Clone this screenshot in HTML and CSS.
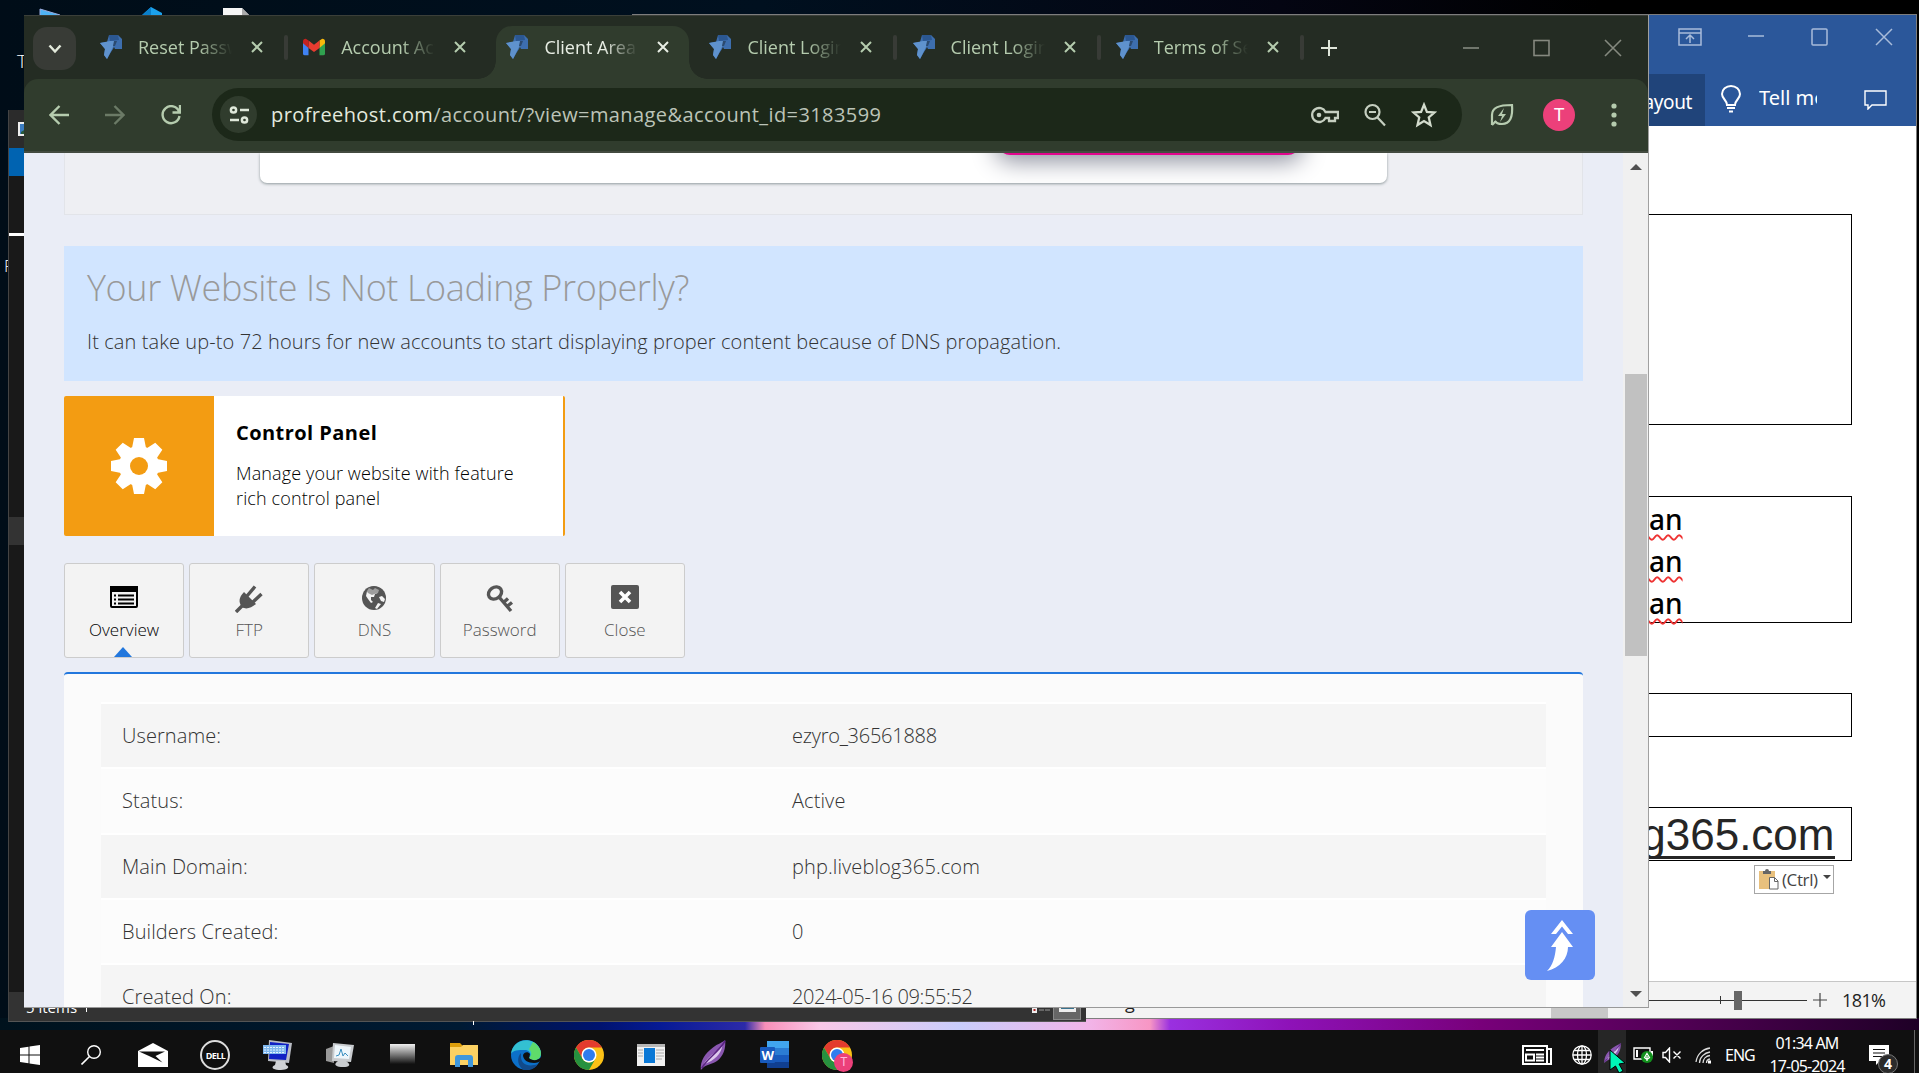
FILE: index.html
```html
<!DOCTYPE html>
<html lang="en">
<head>
<meta charset="utf-8">
<title>Desktop</title>
<link rel="stylesheet" href="styles.css">
</head>
<body>
<svg class="defs" width="0" height="0" aria-hidden="true">
  <symbol id="fav" viewBox="0 0 22 24"><path d="M9 0h9l4 4v10h-7l-1-2-1 2-2 3-4 7-3-4 1-6-5-6 7-1z" fill="#3d6eae"/><path d="M9 0h9l1 5-9 1z" fill="#2b5791"/><path d="M0 8l10-2 5 0-2 6-6 12-3-4 1-6z" fill="#5f92cd"/><path d="M14 6l3 0-2 5-2 0z" fill="#2b4a70"/></symbol>
  <symbol id="x" viewBox="0 0 12 12"><path d="M1 1l10 10M11 1L1 11" fill="none" stroke="currentColor" stroke-width="2"/></symbol>
  <symbol id="chrome" viewBox="0 0 30 30"><circle cx="15" cy="15" r="15" fill="#fbc116"/><path d="M2 7.5A15 15 0 0 1 28 7.5H15A7.5 7.500 0 0 0 8.500 11.300L8 18z" fill="#e33b2e"/><path d="M2 7.500A15 15 0 0 0 15 30l6.500-11.250A7.500 7.500 0 0 1 8.500 18.750z" fill="#26913f"/><circle cx="15" cy="15" r="7.500" fill="#fff"/><circle cx="15" cy="15" r="6" fill="#2f7cee"/></symbol>
  <symbol id="quill" viewBox="0 0 30 32"><path d="M2 32C1 22 7 14 15 8c5-4 10-5 13-8 1 9-2 17-8 22-5 4-12 4-16 8z" fill="#8a57b0"/><path d="M5 26C9 18 17 14 25 6c-1 8-8 16-20 20z" fill="#dcc9ec"/><path d="M3 30C9 19 19 15 28 1" fill="none" stroke="#5a2382" stroke-width="1.600"/></symbol>
</svg>
<main class="desktop">
  <svg class="shortcuts" width="260" height="16" viewBox="0 0 260 16"><path d="M40 9l20 6v1H40z" fill="#4fb4f4" stroke="#9ad" stroke-width="1"/><path d="M141 16l10-9 11 6v3z" fill="#1ba1ec"/><path d="M141 16l10-9v9z" fill="#0b7fc9"/><path d="M223 8h19l8 8h-27z" fill="#f5f5f5"/><path d="M242 8l8 8h-8z" fill="#aaa"/></svg>
  <span class="desk-letter">T</span>
  <span class="desk-letter low">F</span>
  <div class="tick"></div>

  <section class="word">
    <header class="w-title">
      <div class="w-controls">
        <svg width="24" height="18" viewBox="0 0 24 18"><path d="M1 1h22v16H1zM1 5h22M12 15V7M8 11l4-4 4 4" /></svg>
        <svg width="18" height="18" viewBox="0 0 18 18"><path d="M1 8h16"/></svg>
        <svg width="18" height="18" viewBox="0 0 18 18"><rect x="1" y="1" width="15" height="16" rx="1"/></svg>
        <svg width="18" height="18" viewBox="0 0 18 18"><path d="M1 1l16 16M17 1L1 17"/></svg>
      </div>
      <div class="w-tabs">
        <span class="w-tab">Layout</span>
        <svg class="bulb" width="20" height="28" viewBox="0 0 20 28"><path d="M6 20c0-5-5-6-5-11a9 8 0 0 1 18 0c0 5-5 6-5 11zM6 23h8M8 26.500h4" fill="none" stroke="#fff" stroke-width="2"/></svg>
        <span class="tell">Tell me</span>
        <svg class="comment" width="23" height="20" viewBox="0 0 23 20"><path d="M1 1h21v14H8l-4 4v-4H1z" fill="none" stroke="#fff" stroke-width="1.400"/></svg>
      </div>
    </header>
    <div class="w-doc">
      <div class="cell c1"></div>
      <div class="cell c2"><p>an</p><p>an</p><p>an</p></div>
      <div class="cell c3"></div>
      <div class="cell c4"><span>g365.com</span></div>
      <div class="paste"><svg width="20" height="21" viewBox="0 0 20 21"><rect x="0" y="2" width="16" height="18" fill="#e8c07d"/><path d="M4 2h2a2 2 0 0 1 4 0h2v3H4z" fill="#666"/><path d="M10.500 8.500h5l3.500 3.500v8h-8.500z" fill="#fff" stroke="#666"/><path d="M15.500 8.500v4h3.500" fill="none" stroke="#666"/></svg><span>(Ctrl)</span><i></i></div>
    </div>
    <footer class="w-status">
      <span class="w-g">g</span><i class="w-view"></i>
      <div class="slider"><i class="notch"></i><i class="knob"></i></div>
      <svg width="14" height="14" viewBox="0 0 14 14"><path d="M0 7h14M7 0v14" stroke="#444" stroke-width="1.200"/></svg>
      <span class="zoom">181%</span>
    </footer>
  </section>

  <section class="explorer">
    <div class="ex-title"><svg width="16" height="14" viewBox="0 0 16 14"><rect x="1" y="1" width="14" height="12" fill="#3b7cc0" stroke="#eee" stroke-width="2"/><path d="M3 10l5-3 5 3v2H3z" fill="#265a3a"/></svg></div>
    <div class="ex-ribbon"></div>
    <div class="ex-body"><i class="ex-line"></i><i class="ex-sel"></i></div>
    <div class="ex-status"><span class="ex-items">5 items</span><i class="ex-sep"></i><span class="ex-grow"></span><svg width="22" height="8" viewBox="0 0 22 8"><rect x="1" y="0" width="5" height="7" fill="#eee"/><rect x="2.500" y="3" width="2" height="2" fill="#a22"/><path d="M8 4h5M14 4h5" stroke="#999"/></svg><span class="ex-view"><svg width="17" height="8" viewBox="0 0 17 8"><path d="M0 0h17v8H0z" fill="#eee"/><path d="M2 0h13v5H2z" fill="#37728e"/></svg></span></div>
  </section>

  <section class="chrome">
    <div class="strip">
      <span class="list"><svg width="14" height="10" viewBox="0 0 14 10"><path d="M1.500 1.500L7 7.500l5.500-6" fill="none" stroke="#e3eadc" stroke-width="2.500"/></svg></span>
      <div class="tab"><svg class="fav"><use href="#fav"/></svg><span class="t">Reset Passwo</span><svg class="x"><use href="#x"/></svg><i class="sep"></i></div>
      <div class="tab"><svg class="fav" viewBox="0 0 24 18"><path d="M0 3v13a2 2 0 0 0 2 2h4V8z" fill="#3f82f2"/><path d="M24 3v13a2 2 0 0 1-2 2h-4V8z" fill="#30a24f"/><path d="M18 2l3-2q3 0 3 3v2l-6 5z" fill="#f9b90c"/><path d="M6 2l6 4.500L18 2v8l-6 4.500L6 10z" fill="#e83c30"/><path d="M6 2L3 0Q0 0 0 3v2l6 5z" fill="#c5221f"/></svg><span class="t">Account Act</span><svg class="x"><use href="#x"/></svg></div>
      <div class="tab active"><svg class="fav"><use href="#fav"/></svg><span class="t">Client Area</span><svg class="x"><use href="#x"/></svg></div>
      <div class="tab"><svg class="fav"><use href="#fav"/></svg><span class="t">Client Login</span><svg class="x"><use href="#x"/></svg><i class="sep"></i></div>
      <div class="tab"><svg class="fav"><use href="#fav"/></svg><span class="t">Client Login</span><svg class="x"><use href="#x"/></svg><i class="sep"></i></div>
      <div class="tab"><svg class="fav"><use href="#fav"/></svg><span class="t">Terms of Ser</span><svg class="x"><use href="#x"/></svg><i class="sep"></i></div>
      <svg class="plus" width="16" height="16" viewBox="0 0 16 16"><path d="M0 8h16M8 0v16" stroke="#dfe6da" stroke-width="2"/></svg>
      <div class="win">
        <svg width="18" height="18" viewBox="0 0 18 18"><path d="M1 9h16"/></svg>
        <svg width="18" height="18" viewBox="0 0 18 18"><rect x="1" y="1.500" width="15" height="15"/></svg>
        <svg width="18" height="18" viewBox="0 0 18 18"><path d="M1 1l16 16M17 1L1 17"/></svg>
      </div>
    </div>
    <div class="toolbar">
      <svg class="nav" width="20" height="20" viewBox="0 0 20 20"><path d="M20 10H2M10.500 1L1.500 10l9 9"/></svg>
      <svg class="nav dim" width="20" height="20" viewBox="0 0 20 20"><path d="M0 10h18M9.500 1l9 9-9 9"/></svg>
      <svg class="nav" width="20" height="20" viewBox="0 0 20 20"><path d="M18 6.500A8.500 8.500 0 1 0 18.500 11M19 0v7.500h-7.500"/></svg>
      <div class="omni">
        <span class="site"><svg width="20" height="18" viewBox="0 0 20 18"><g fill="none" stroke="#dfe8da" stroke-width="2.500"><circle cx="4.500" cy="4" r="2.600"/><path d="M11 4h9M1 14h9"/><circle cx="15.500" cy="14" r="2.600"/></g></svg></span>
        <span class="url">profreehost.com<em>/account/?view=manage&amp;account_id=3183599</em></span>
        <svg width="28" height="18" viewBox="0 0 28 18"><path d="M14.500 6A7 7 0 1 0 14.500 12H18v3h6v-3h3V6z" fill="none" stroke="#c5cfc0" stroke-width="2.300"/><circle cx="8" cy="9" r="2.300" fill="#c5cfc0"/></svg>
        <svg width="24" height="24" viewBox="0 0 24 24"><g fill="none" stroke="#c5cfc0" stroke-width="2.200"><circle cx="9.500" cy="9" r="7"/><path d="M14.500 14.500L22 22.500M6 9h7"/></g></svg>
        <svg width="26" height="26" viewBox="0 0 24 24"><path d="M12 2.500l2.700 6.600 7 .6-5.300 4.600 1.600 7L12 17.600 6 21.300l1.600-7L2.300 9.700l7-.6z" fill="none" stroke="#d3dccd" stroke-width="2.100"/></svg>
      </div>
      <svg class="leaf" width="24" height="24" viewBox="0 0 24 24"><path d="M2 22V12C2 5 8 2 22 2c1 12-2 19-10 19-4 0-6-1-7-3" fill="none" stroke="#b7ccb0" stroke-width="2.200"/><path d="M2 22l4-4" stroke="#b7ccb0" stroke-width="2.200"/><path d="M14 5l-6 8h4l-2 6 6-8h-4z" fill="#b7ccb0"/></svg>
      <span class="avatar">T</span>
      <svg class="dots" width="6" height="24" viewBox="0 0 6 24"><circle cx="3" cy="3" r="2.600"/><circle cx="3" cy="12" r="2.600"/><circle cx="3" cy="21" r="2.600"/></svg>
    </div>
    <div class="view">
      <div class="page">
        <div class="banner"><div class="ad"><i class="cta"></i></div></div>
        <div class="notice"><h2>Your Website Is Not Loading Properly?</h2><p>It can take up-to 72 hours for new accounts to start displaying proper content because of DNS propagation.</p></div>
        <div class="cp">
          <span class="gear"><svg width="56" height="56" viewBox="-28 -28 56 56"><g fill="#fff"><circle r="20"/><g id="g1"><path id="tooth" d="M-5 -28h10l2 10h-14zM-5 28h10l2-10h-14z"/><use href="#tooth" transform="rotate(90)"/></g><use href="#g1" transform="rotate(45)"/></g><circle r="9" fill="#f39c12"/></svg></span>
          <div class="cp-text"><h3>Control Panel</h3><p>Manage your website with feature<br>rich control panel</p></div>
        </div>
        <nav class="actions">
          <a class="on"><svg width="28" height="24" viewBox="0 0 28 24"><rect x="1" y="2" width="26" height="20" rx="1" fill="none" stroke="currentColor" stroke-width="2"/><path d="M0 1h28v6H0z" fill="currentColor"/><path d="M4 10.500h2M4 14.500h2M4 18.500h2M8 10.500h16M8 14.500h16M8 18.500h16" stroke="currentColor" stroke-width="2"/></svg><span>Overview</span><i></i></a>
          <a><svg width="28" height="28" viewBox="0 0 28 28"><path d="M7 22C3 17 4 12 9 7l12 12c-5 4-10 6-14 3z" fill="currentColor"/><path d="M1 27l8-8M12 11l8-9.500M18 17L26.500 9" stroke="currentColor" stroke-width="3.400"/></svg><span>FTP</span></a>
          <a><svg width="26" height="26" viewBox="0 0 26 26"><circle cx="13" cy="13" r="12" fill="currentColor"/><path d="M8 3l4 2 2-2 4 2-1 3-3 1-1 3-3 0 0 3 2 2-2 1-3-4-2-3 1-5zM18 12l3-1 3 3-1 3-3-1zM17 18l3 1-4 5-2-1z" fill="#f3f3f3"/><path d="M4 4q9-6 18 1l-3 5-3-2-5 2-4-2z" fill="currentColor" opacity=".55"/></svg><span>DNS</span></a>
          <a><svg width="28" height="28" viewBox="0 0 28 28"><g fill="none" stroke="currentColor" stroke-width="3.400"><ellipse cx="9" cy="8" rx="7" ry="5.600" transform="rotate(-35 9 8)"/><path d="M13 12l12 14M18 17l4-3.500M21.500 21l4.500-3.500"/></g></svg><span>Password</span></a>
          <a><svg width="28" height="24" viewBox="0 0 28 24"><rect width="28" height="24" rx="2" fill="currentColor"/><path d="M9 7l10 10M19 7L9 17" stroke="#fff" stroke-width="3.600"/></svg><span>Close</span></a>
        </nav>
        <div class="panel">
          <dl>
            <div><dt>Username:</dt><dd class="num">ezyro_36561888</dd></div>
            <div><dt>Status:</dt><dd>Active</dd></div>
            <div><dt>Main Domain:</dt><dd>php.liveblog365.com</dd></div>
            <div><dt>Builders Created:</dt><dd>0</dd></div>
            <div><dt>Created On:</dt><dd class="num date">2024-05-16 09:55:52</dd></div>
          </dl>
        </div>
        <a class="totop"><svg width="28" height="54" viewBox="0 0 28 54"><path d="M5 16L16 2l11 14h-5l-6-7.500L10 16z" fill="#fff"/><path d="M16 14l11 15h-5C22 40 14 50 1 53c6-6 8-14 9-24H5z" fill="#fff"/></svg></a>
      </div>
      <div class="scroll"><i class="up"></i><i class="thumb"></i><i class="down"></i></div>
    </div>
  </section>

  <footer class="taskbar">
    <div class="apps">
      <span><svg width="20" height="20" viewBox="0 0 20 20"><path d="M0 3l8.500-1.300V9.500H0zM9.500 1.500L20 0v9.500H9.500zM0 10.500h8.500v7.800L0 17zM9.500 10.500H20V20L9.500 18.500z" fill="#fff"/></svg></span>
      <span><svg width="20" height="20" viewBox="0 0 20 20"><circle cx="13" cy="7" r="6.300" fill="none" stroke="#fff" stroke-width="1.400"/><path d="M8.500 11.500L.5 19.500" stroke="#fff" stroke-width="1.600"/></svg></span>
      <span><svg width="30" height="24" viewBox="0 0 30 24"><path d="M0 8L15 0l15 8v16H0z" fill="#fff"/><path d="M1 8.500h26L17.500 13l7 6.500L11 13z" fill="#101010"/></svg></span>
      <span class="dell">DELL</span>
      <span><svg width="30" height="30" viewBox="0 0 30 30"><path d="M6 0l23 3-3 20-21-2z" fill="#b9bcc4"/><path d="M7 2l19 2-3 16-17-1z" fill="#1021c4"/><path d="M0 5h23v9H0z" fill="#7fb7ee"/><path d="M1 7.500h21M1 10h21M1 12.500h21" stroke="#e5f2ff" stroke-dasharray="2 1"/><path d="M13 21h9l1 4c5 2 1 5-5 5s-12-2-6-5z" fill="#d0d2d6"/></svg></span>
      <span><svg width="28" height="26" viewBox="0 0 28 26"><path d="M0 7l8-3v17l-8-2z" fill="#999"/><path d="M7 1l21 2-3 17-19-1z" fill="#c9cccf"/><path d="M9 3l16 2-2 12-15-1z" fill="#eef6fb"/><path d="M10 14l3-1 2-6 2 7 2-3 3 3" fill="none" stroke="#3a8fc0"/><path d="M12 19h8c6 4 3 6-3 6s-11-2-5-6z" fill="#c9cccf"/></svg></span>
      <span class="slab"></span>
      <span><svg width="28" height="24" viewBox="0 0 28 24"><path d="M0 0h10l3 3h14v19H0z" fill="#dd9e0b"/><path d="M0 4h11l2-2h15v20H0z" fill="#fcd162"/><path d="M5 24v-9q0-3 3-3h12q3 0 3 3v9h-5v-7h-8v7z" fill="#3f97dc"/></svg></span>
      <span><svg width="30" height="30" viewBox="0 0 30 30"><circle cx="15" cy="15" r="15" fill="#0c70c9"/><path d="M0 14C1 4 10-1 18 .5 27 2 32 11 29 17c-2 4-8 4-11 1 3-3 1-8-4-8C7 10 2 10 0 14z" fill="#33c0d2"/><path d="M22 2c8 5 9 11 7 15-2 4-8 4-11 1 3-3 3-6 0-9z" fill="#5fdc6a"/><path d="M10 17c0 6 6 11 17 7-3 5-9 7-14 6-6-3-8-12-3-17z" fill="#114a8b"/><path d="M12 15c0 5 5 8 11 8 3 0 6-1 7-3v-3c-3 4-9 4-12 1l1-4c-2-3-6-2-7 1z" fill="#101010"/></svg></span>
      <span><svg width="30" height="30"><use href="#chrome"/></svg></span>
      <span><svg width="28" height="22" viewBox="0 0 28 22"><path d="M0 0h28v22H0z" fill="#f1f1f1"/><path d="M0 0h28v3H0z" fill="#b5b5b5"/><path d="M7 4h11v15H7z" fill="#0a78d6"/><path d="M1 6h5M1 9h5M1 12h5M19 6h8M19 9h8M19 12h8M19 15h6" stroke="#aaa"/></svg></span>
      <span><svg width="28" height="30"><use href="#quill"/></svg></span>
      <span><svg width="30" height="28" viewBox="0 0 30 28"><path d="M7 0h22v7H7z" fill="#41a5ee"/><path d="M7 7h22v7H7z" fill="#2b7cd3"/><path d="M7 14h22v7H7z" fill="#185abd"/><path d="M7 21h22v6H7z" fill="#103f91"/><rect y="6" width="15" height="16" rx="1" fill="#185abd"/><text x="1.500" y="18.500">W</text></svg></span>
      <span class="duo"><svg width="30" height="30"><use href="#chrome"/></svg><b>T</b></span>
    </div>
    <div class="tray">
      <svg class="news" width="30" height="20" viewBox="0 0 30 20"><g fill="none" stroke="#fff" stroke-width="2"><path d="M1 1h24v18H1zM25 4h4v15h-4M4 5h18M4 9.500h8v6H4zM14 9.500h8M14 12.500h8M14 15.500h8"/></g></svg>
      <svg class="globe" width="20" height="20" viewBox="0 0 20 20"><g fill="none" stroke="#fff" stroke-width="1.300"><circle cx="10" cy="10" r="9.200"/><ellipse cx="10" cy="10" rx="4.500" ry="9.200"/><path d="M10 1v18M1 10h18M2.500 5.500h15M2.500 14.500h15"/></g></svg>
      <span class="hot"><svg width="19" height="20"><use href="#quill"/></svg><svg class="cursor" width="17" height="24" viewBox="0 0 17 24"><path d="M1 1l15 13-6 1 4 7-4 2-3.500-7L1 21z" fill="#00f5b8" stroke="#000"/></svg></span>
      <svg class="batt" width="20" height="16" viewBox="0 0 20 16"><path d="M1 1h16v11H1z" fill="none" stroke="#fff" stroke-width="1.400"/><path d="M3 3h2v7H3zM18 4h2v5h-2z" fill="#fff"/><circle cx="14" cy="10" r="6" fill="#12901d"/><path d="M14 6.500l2.500 4-2.500 2-2.500-2zM14 9v5" fill="none" stroke="#fff" stroke-width="1.200"/></svg>
      <svg class="snd" width="20" height="16" viewBox="0 0 20 16"><path d="M1 5.500h2.500L7.500 1v14l-4-4.500H1zM11.500 4.500l7 7M18.500 4.500l-7 7" fill="none" stroke="#fff" stroke-width="1.400"/></svg>
      <svg class="wifi" width="18" height="17" viewBox="0 0 18 17"><g fill="none" stroke="#ddd" stroke-width="1.300"><path d="M1 15C2 7 8 2 15 1M4.500 16c0-6 5-10 10.500-11M8 16c0-4 3-7 7-7.500M11.500 16q0-3.500 3.500-4"/></g><rect x="13" y="13.500" width="3" height="3" fill="#fff"/></svg>
      <span class="eng">ENG</span>
      <div class="clock"><span>01:34 AM</span><span>17-05-2024</span></div>
      <span class="notif"><svg width="20" height="20" viewBox="0 0 20 20"><path d="M0 0h20v16h-9l-4 4v-4H0z" fill="#fff"/><path d="M4 4.500h12M4 8h12M4 11.500h12" stroke="#111" stroke-width="1.200"/></svg><b>4</b></span>
      <i class="peek"></i>
    </div>
  </footer>
</main>
</body>
</html>
```
FILE: styles.css
```css
* { box-sizing: border-box; }
body { margin: 0; overflow: hidden; font-family: "Open Sans", "Noto Sans", sans-serif; }
h2, h3, p, dl, dd { margin: 0; }
b, em, i { font-weight: inherit; font-style: normal; }
svg { display: block; flex: none; }
.defs { position: absolute; }

.desktop {
  position: relative; width: 1919px; height: 1073px; overflow: hidden;
  background:
    linear-gradient(90deg, #00121d 0, #001a33 460px, #00136f 600px, #061a94 660px, #2c2aa8 745px, #f78fb8 765px, #f9c8e8 820px, #c9cdfb 960px, #f2b4e8 1090px, #f796c4 1150px, #9a30e0 1170px, #8e12b8 1290px, #78007a 1480px, #4c0050 1700px, #1e0026 1919px) 0 1018px / 100% 12px no-repeat,
    linear-gradient(90deg, #000d18 0, #00101f 760px, #040512 1280px, #000 1600px, #000 100%);
}
.shortcuts { position: absolute; left: 0; top: 0; }
.desk-letter { position: absolute; left: 17px; top: 48px; font-size: 19px; line-height: 26px; color: #fff; font-weight: 300; }
.desk-letter.low { left: 4px; top: 253px; font-size: 17px; }
.tick { position: absolute; z-index: 1; left: 473px; top: 1021px; width: 1px; height: 4px; background: #fff; }

/* File Explorer, mostly covered */
.explorer { position: absolute; left: 8px; top: 110px; width: 1078px; height: 912px; display: flex; flex-direction: column; background: #191919; border-left: 1px solid #444; border-bottom: 1px solid #555; }
.ex-title { height: 38px; background: #2b2b2b; padding: 12px 0 0 9px; }
.ex-ribbon { height: 28px; background: #0063b1; }
.ex-body { flex: 1; display: flex; flex-direction: column; padding-top: 57px; }
.ex-line { height: 3px; background: #fff; }
.ex-sel { height: 28px; margin-top: 281px; background: #333; }
.ex-status { height: 29px; background: #333; display: flex; align-items: flex-end; padding-bottom: 7px; color: #fff; }
.ex-items { font-size: 15px; line-height: 20px; margin: 0 12px -3px 17px; width: 48px; white-space: nowrap; }
.ex-sep { width: 1px; height: 14px; background: #fff; margin-bottom: 2px; }
.ex-grow { flex: 1; }
.ex-view { align-self: stretch; margin: 0 5px -6px 0; width: 28px; background: #666; border: 1px solid #888; display: flex; align-items: flex-end; justify-content: center; padding-bottom: 7px; }

/* Word */
.word { position: absolute; left: 632px; top: 14px; width: 1285px; height: 1005px; display: flex; flex-direction: column; background: #fff; border: 1px solid #7d7d7d; }
.w-title { height: 111px; background: #2b579a; display: flex; flex-direction: column; }
.w-controls { height: 59px; display: flex; justify-content: flex-end; padding: 13px 23px 0 0; gap: 46px; }
.w-controls svg { fill: none; stroke: #a9bcda; stroke-width: 1.500; }
.w-controls svg:first-child { margin-right: -1px; }
.w-tabs { flex: 1; display: flex; align-items: center; padding-left: 1001px; color: #fff; font-family: "Noto Sans", sans-serif; }
.w-tab { width: 71px; height: 52px; background: #20447a; display: flex; justify-content: flex-end; align-items: center; padding: 3px 13px 0 0; font-size: 19px; letter-spacing: -.4px; }
.bulb { margin: -2px 18px 0 16px; }
.tell { width: 58px; overflow: hidden; white-space: nowrap; font-size: 20px; line-height: 28px; margin-top: -5px; }
.comment { margin-left: 47px; }
.w-doc { flex: 1; padding-top: 88px; position: relative; }
.cell { width: 1218.500px; border: solid #000; border-width: 1px 1px 1px 0; }
.c1 { height: 211px; margin-bottom: 71px; }
.c2 { height: 127px; margin-bottom: 70px; padding: 1px 0 0 1016px; }
.c2 p { width: 37px; font: 500 28px/42px "Noto Sans", sans-serif; text-decoration: underline wavy #e33 1.500px; text-underline-offset: 4px; text-decoration-skip-ink: none; }
.c3 { height: 44px; margin-bottom: 70px; }
.c4 { height: 54px; text-align: right; padding: 2px 16px 0 0; font: 44px/50px "Liberation Sans", Arial, sans-serif; color: #262626; }
.c4 span { border-bottom: 3px solid #262626; display: inline-block; height: 49px; line-height: 50px; }
.paste { display: flex; align-items: center; width: 80px; height: 29px; margin: 4px 0 0 1121px; border: 1px solid #a6a6a6; padding-left: 4px; gap: 3px; color: #444; font-size: 17px; letter-spacing: -.4px; }
.paste i { border: solid transparent; border-width: 4px 4px 0; border-top-color: #444; margin: -5px 0 0 2px; }
.w-status { height: 37px; background: #f3f3f3; border-top: 1px solid #c6c6c6; display: flex; align-items: center; color: #222; }
.w-g { width: 20px; margin: 4px 425px 0 492px; font-size: 18px; line-height: 20px; }
.w-view { width: 57px; margin-left: -19px; align-self: stretch; background: #c8c8c8; margin-right: 40px; }
.slider { width: 159px; height: 19px; display: flex; align-items: center; background: linear-gradient(#333, #333) 0 9px / 100% 1px no-repeat; margin-right: 6px; }
.notch { width: 1px; height: 8px; margin-left: 72px; background: #333; }
.knob { width: 8px; height: 19px; margin-left: 13px; background: #666; }
.zoom { margin-left: 15px; font-size: 18px; letter-spacing: -.6px; }

/* Browser window */
.chrome { position: absolute; left: 24px; top: 15px; width: 1625px; height: 993px; display: flex; flex-direction: column; background: #242c23; border-right: 1px solid #a0a0a0; border-bottom: 1px solid #999; }
.strip { height: 64px; display: flex; align-items: stretch; padding-top: 10px; border-top: 1px solid #3b3f39; color: #b5ccae; }
.list { width: 43px; height: 43px; margin: 1px 12px 0 9px; border-radius: 14px; background: #383b36; display: grid; place-items: center; }
.tab { width: 203.200px; padding-left: 12px; display: flex; align-items: center; padding-bottom: 11px; }
.tab .fav { width: 22px; height: 24px; margin-right: 16px; }
.t { width: 96px; overflow: hidden; white-space: nowrap; font-size: 18px; line-height: 26px; -webkit-mask-image: linear-gradient(90deg, #000 60px, transparent 94px); mask-image: linear-gradient(90deg, #000 60px, transparent 94px); }
.x { width: 12px; height: 12px; margin-left: 17px; }
.sep { width: 4px; height: 25px; margin-left: 21px; background: #383b36; border-radius: 2px; }
.tab.active { color: #e8eee4; position: relative; background: #303c2d; border-radius: 16px 16px 0 0; width: 193px; margin: 0 8px 0 2px; padding-left: 10px; }
.tab.active::before, .tab.active::after { content: ""; position: absolute; bottom: 0; width: 18px; height: 18px; }
.tab.active::before { left: -18px; background: radial-gradient(circle at 0 0, transparent 17.500px, #303c2d 18px); }
.tab.active::after { right: -18px; background: radial-gradient(circle at 100% 0, transparent 17.500px, #303c2d 18px); }
.plus { margin: 14px 0 0 14px; }
.win { margin-left: auto; display: flex; gap: 53px; padding: 13px 26px 0 0; }
.win svg { fill: none; stroke: #85897f; stroke-width: 1.600; }
.toolbar { height: 74px; background: #303c2d; border-radius: 14px 14px 0 0; border-bottom: 2px solid #434b40; display: flex; align-items: center; padding: 0 0 1px 25px; }
.nav { fill: none; stroke: #b5ccae; stroke-width: 2.400; margin-right: 36px; }
.nav.dim { stroke: #6b7a66; }
.omni { width: 1250px; height: 53px; margin-left: -5px; border-radius: 27px; background: #1c2819; display: flex; align-items: center; padding-left: 8px; }
.site { width: 37px; height: 37px; border-radius: 50%; background: #303c2d; display: grid; place-items: center; }
.url { margin: -1px auto 0 14px; font-size: 20px; letter-spacing: .41px; color: #e3eade; white-space: nowrap; }
.url em { color: #bcc4b8; }
.omni svg + svg { margin-left: 24px; }
.omni > svg:last-child { margin-right: 25px; }
.leaf { margin-left: 28px; }
.avatar { width: 32px; height: 32px; margin: 0 36px 0 29px; border-radius: 50%; background: #ec407a; color: #fff; font: 18px/32px Roboto, sans-serif; text-align: center; }
.dots { fill: #b5ccae; }

.view { flex: 1; min-height: 0; display: flex; }
.page { flex: 1; position: relative; overflow: hidden; background: #eaedf6; padding: 0 40px; }
.banner { height: 62px; background: #eeeff3; border: 1px solid #e2e4e9; border-top: 0; padding: 0 195px; }
.ad { height: 30px; background: #fff; border-radius: 0 0 7px 7px; box-shadow: 0 1px 3px #8f999c; position: relative; overflow: hidden; }
.cta { position: absolute; left: 738px; top: -28px; width: 302px; height: 30px; border-radius: 0 0 12px 12px; background: #e3058e; box-shadow: 0 4px 24px 2px #8a8d9c; }
.notice { height: 135px; margin-top: 31px; background: #d1e5ff; padding: 20px 23px; color: #333; font-weight: 300; }
.notice h2 { font-size: 36px; line-height: 44px; font-weight: 300; letter-spacing: -.39px; color: #999; white-space: nowrap; }
.notice p { font-size: 20px; line-height: 28px; margin-top: 18px; letter-spacing: .1px; white-space: nowrap; }
.cp { width: 501px; height: 140px; margin-top: 15px; display: flex; background: #fff; border-right: 2px solid #f39c12; border-radius: 2px; color: #000; }
.gear { width: 150px; background: #f39c12; display: grid; place-items: center; border-radius: 2px 0 0 2px; }
.cp-text { padding: 23px 0 0 22px; }
.cp h3 { font-size: 20px; line-height: 28px; font-weight: 700; letter-spacing: .45px; }
.cp p { font-size: 18px; line-height: 25px; margin-top: 14px; font-weight: 300; letter-spacing: .13px; white-space: nowrap; }
.actions { display: flex; gap: 5px; margin-top: 27px; }
.actions a { width: 120.200px; height: 95px; border: 1px solid #ccc; border-radius: 3px; background: #f3f3f3; display: flex; flex-direction: column; align-items: center; justify-content: space-between; padding: 19px 0 14px; color: #555; font-size: 17px; line-height: 26px; font-weight: 300; position: relative; }
.actions svg { margin-top: 2px; }
.actions .on { color: #000; }
.actions i { position: absolute; bottom: 0; left: 49px; border: solid transparent; border-width: 0 9px 10px; border-bottom-color: #2277dd; }
.panel { margin-top: 14px; border-top: 2px solid #2277dd; border-radius: 4px 4px 0 0; background: #fbfbfb; padding: 28px 37px 0; height: 400px; }
dl { display: grid; grid-auto-rows: 63.300px; gap: 2px; background: #fff; padding-top: 2px; font-size: 20px; font-weight: 300; letter-spacing: .1px; color: #333; }
dl div { display: grid; grid-template-columns: 670px 1fr; padding: 0 21px; align-items: center; background: #f5f5f5; }
dl div:nth-child(even) { background: #fcfcfc; }
.num { letter-spacing: -.25px; }
.date { letter-spacing: -.36px; }
.totop { position: absolute; left: 1501px; top: 757px; width: 70px; height: 70px; border-radius: 6px; background: #658ff3; display: grid; place-items: center; }
.scroll { width: 25px; background: #f0f0f0; display: flex; flex-direction: column; align-items: center; padding: 11px 0 10px 1px; }
.up { border: solid transparent; border-width: 0 6px 6px; border-bottom-color: #505050; }
.down { border: solid transparent; border-width: 6px 6px 0; border-top-color: #505050; margin-top: auto; }
.thumb { width: 22px; height: 282px; background: #c1c1c1; margin-top: 204px; }

/* Taskbar */
.taskbar { position: absolute; left: 0; right: 0; bottom: 0; height: 43px; background: #101010; display: flex; justify-content: space-between; color: #fff; }
.apps { display: flex; padding: 4px 0 0 0; }
.apps > span { width: 62.200px; height: 42px; display: grid; place-items: center; }
.apps > span:first-child { width: 60px; }
.apps text { font: 700 13px "Open Sans", sans-serif; fill: #fff; }
.apps .dell { width: 30px; height: 30px; margin: 6px 16.100px; border: 2px solid #ddd; border-radius: 50%; font-size: 9px; font-weight: 700; letter-spacing: -.6px; }
.apps .slab { width: 25px; height: 20px; margin: 10px 18.600px; background: linear-gradient(#f0f0f0, #111); }
.apps .duo { position: relative; }
.duo b { position: absolute; left: 28px; top: 19px; width: 19px; height: 19px; border-radius: 50%; background: #ec407a; color: #fbd; font: 12px/19px Roboto, sans-serif; text-align: center; }
.tray { display: flex; align-items: center; padding-top: 7px; }
.news { margin-right: 20px; }
.hot { width: 28px; height: 43px; margin: -7px 0 0 6px; padding: 13px 0 0 5px; background: #262626; position: relative; }
.cursor { position: absolute; left: 11px; top: 19px; }
.batt { margin-left: 7px; }
.snd { margin-left: 9px; }
.wifi { margin-left: 13px; }
.eng { margin-left: 12px; width: 29px; font: 16px "Noto Sans", sans-serif; letter-spacing: -1px; }
.clock { width: 90px; margin-left: 8px; display: flex; flex-direction: column; align-items: center; font: 16px/23px "Noto Sans", sans-serif; letter-spacing: -.85px; white-space: nowrap; margin-top: -1px; }
.notif { position: relative; margin-left: 17px; }
.notif b { position: absolute; left: 9px; top: 9px; width: 20px; height: 20px; border-radius: 50%; border: 1px solid #777; background: #2b2b2b; font: 700 14px/18px "Open Sans", sans-serif; text-align: center; }
.peek { width: 1px; height: 43px; margin: -7px 4px 0 25px; background: #666; }
```
